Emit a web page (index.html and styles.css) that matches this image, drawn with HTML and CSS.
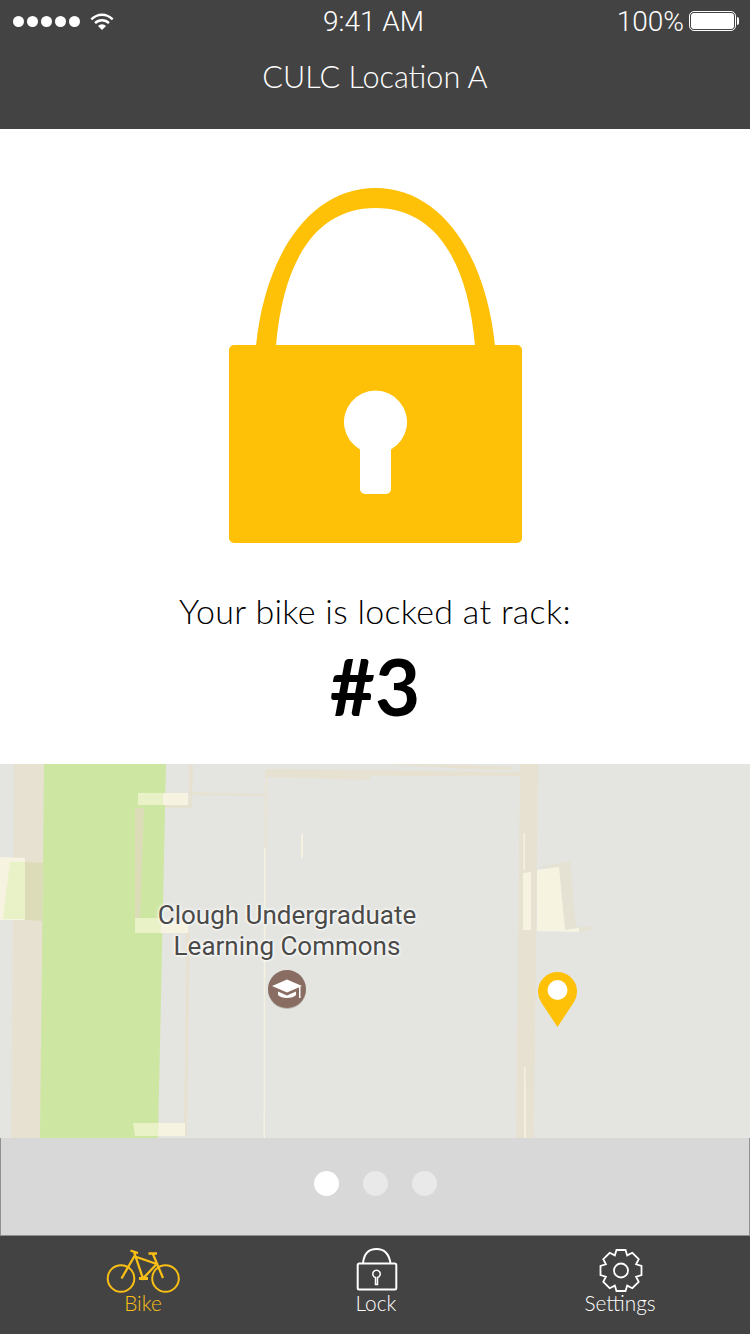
FILE: index.html
```html
<!DOCTYPE html>
<html lang="en">
<head>
<meta charset="utf-8">
<title>CULC Location A</title>
<link rel="stylesheet" href="styles.css">
</head>
<body>
<div class="phone">
  <header class="header">
    <div class="status">
      <div class="status-left">
        <div class="signal"><i></i><i></i><i></i><i></i><i></i></div>
        <svg class="wifi" viewBox="90 12 24 18"><path d="M90.500 18.500a16 16 0 0 1 23 0l-1.600 1.800a13.600 13.600 0 0 0-19.800 0z"/><path d="M94.200 22.300a10.800 10.800 0 0 1 15.600 0l-1.700 1.800a8.400 8.400 0 0 0-12.200 0z"/><path d="M98 26a5.600 5.600 0 0 1 8 0l-4 4z"/></svg>
      </div>
      <div class="status-time">9:41 AM</div>
      <div class="status-right">
        <span class="percent">100%</span>
        <div class="battery"><div class="battery-fill"></div></div>
      </div>
    </div>
    <h1 class="title">CULC Location A</h1>
  </header>

  <main class="hero">
    <svg class="big-lock" viewBox="229 188 293 355">
      <path class="lock-fill" d="M256 346C265 255 310 188 375.500 188S486 255 495 346H475C468 262 436 208 375.500 208S283 262 276 346Z"/>
      <path class="lock-fill" fill-rule="evenodd" d="M234 345H517a5 5 0 0 1 5 5V538a5 5 0 0 1-5 5H234a5 5 0 0 1-5-5V350a5 5 0 0 1 5-5ZM360 449.500V489a5 5 0 0 0 5 5H386a5 5 0 0 0 5-5V449.500A31.500 31.500 0 1 0 360 449.500Z"/>
    </svg>
    <p class="message">Your bike is locked at rack:</p>
    <p class="rack">#3</p>
  </main>

  <section class="map">
    <svg class="map-bg" viewBox="0 764 750 374">
      <g class="road">
        <polygon points="14,764 44,764 41,1138 11,1138"/>
        <polygon points="189,764 193,764 192,808 135,808 135,804 189,804"/>
        <polygon points="193,792 265,794 265,796 193,795"/>
        <polygon points="265,769 360,770 520,772 520,776 370,776 369,780 268,777 265,777"/>
        <polygon points="382,764 470,765 512,767 512,770 470,769"/>
        <polygon points="520,764 538,764 534,1138 516,1138"/>
        <polygon points="186,933 190,933 187,1136 184,1136"/>
      </g>
      <polygon class="road-faint" points="265,777 268,777 267,850 264,850"/>
      <polygon class="park" points="44,764 166,764 158,1138 40,1138"/>
      <polygon class="path" points="135,808 144,808 140,918 135,918"/>
      <polygon class="path" points="25,862 43,863 42,921 25,920"/>
      <polygon class="cream-green" points="138,793 163,793 163,805 138,805"/>
      <polygon class="cream" points="163,793 188,793 188,805 163,805"/>
      <polygon class="cream-green" points="135,918 161,918 160,933 135,933"/>
      <polygon class="cream" points="161,920 188,922 188,933 160,933"/>
      <polygon class="cream-green" points="133,1123 159,1123 158,1136 135,1136"/>
      <polygon class="cream" points="159,1123 185,1123 185,1136 158,1136"/>
      <polygon class="cream" points="0,857 25,858 25,920 0,920"/>
      <polygon class="cream-green" points="10,862 25,862 25,919 3,919"/>
      <polygon class="building" points="537,868 570,861 576,928 565,930 559,867"/>
      <polygon class="cream" points="523,873 531,872 531,930 523,930"/>
      <polygon class="cream" points="537,870 559,867 565,930 579,928 579,932 537,931"/>
      <polygon class="building" points="579,927 591,926 591,930 579,932"/>
      <polygon class="line" points="523.500,833 525,833 525,870 523.500,870"/>
      <polygon class="line" points="524,1067 525.500,1067 526,1138 524,1138"/>
      <polygon class="line" points="264,848 265.500,848 265,1138 263.500,1138"/>
      <polygon class="line" points="301,834 303,834 303,856 301,860"/>
    </svg>
    <div class="map-label">Clough Undergraduate<br>Learning Commons</div>
    <svg class="poi" viewBox="0 0 38 40">
      <circle class="poi-shadow" cx="19" cy="20" r="19"/>
      <circle class="poi-disc" cx="19" cy="19" r="19"/>
      <path class="poi-cap" d="M19 9.500 34 16 19 22.500 4 16Z"/>
      <path class="poi-cap" d="M10 21.500 19 25.500 28 21.500V25C25 29 13 29 10 25Z"/>
      <rect class="poi-cap" x="31" y="17" width="1.500" height="11"/>
    </svg>
    <svg class="pin" viewBox="0 0 39 55">
      <path class="pin-body" d="M19.500 55 3.500 30.700A19.500 19.500 0 1 1 35.500 30.700Z"/>
      <circle class="pin-dot" cx="19.500" cy="18" r="10"/>
    </svg>
  </section>

  <section class="pager">
    <span class="dot dot-active"></span>
    <span class="dot"></span>
    <span class="dot"></span>
  </section>

  <nav class="tabs">
    <a class="tab tab-bike">
      <svg class="tab-icon icon-bike" viewBox="105 1247 76 46">
        <circle cx="121" cy="1278.500" r="13.300"/>
        <circle cx="165.500" cy="1278.500" r="13.300"/>
        <path class="frame" d="M121.500 1278.500 134.500 1256M130.500 1250.500 138 1253.200M134 1252 143 1278.500 156.700 1264 133.500 1256M148.500 1253.500H157M152.700 1253.500 163 1278"/>
        <path class="pedal" d="M139 1278.500H148"/>
      </svg>
      <span class="tab-label">Bike</span>
    </a>
    <a class="tab tab-lock">
      <svg class="tab-icon icon-lock" viewBox="336 1247 80 46">
        <path d="M363 1263C364 1254 369 1249 376.500 1249S389 1254 390.500 1263"/>
        <rect x="357.700" y="1263.500" width="38.600" height="26" rx="1.500"/>
        <path class="keyhole" d="M375.500 1277.500V1284.500H377.500V1277.500A3.700 3.700 0 1 0 375.500 1277.500Z"/>
      </svg>
      <span class="tab-label">Lock</span>
    </a>
    <a class="tab tab-settings">
      <svg class="tab-icon icon-gear" viewBox="-41 -23.500 80 46">
        <path d="M-4.500-20.500H4.500L6.200-15.100 11.300-17.700 17.700-11.300 15.100-6.200 20.500-4.500V4.500L15.100 6.200 17.700 11.300 11.300 17.700 6.200 15.100 4.500 20.500H-4.500L-6.200 15.100-11.300 17.700-17.700 11.300-15.100 6.200-20.500 4.500V-4.500L-15.100-6.200-17.700-11.300-11.300-17.700-6.200-15.100Z"/>
        <circle cx="0" cy="0" r="7"/>
      </svg>
      <span class="tab-label">Settings</span>
    </a>
  </nav>
</div>
</body>
</html>
```
FILE: styles.css
```css
* { box-sizing: border-box; }
html, body { margin: 0; padding: 0; }
body { background: #fff; font-family: "Lato", "Liberation Sans", sans-serif; }
.phone { width: 750px; height: 1334px; display: flex; flex-direction: column; overflow: hidden; }

.header { height: 129px; background: #434343; color: #fff; flex: none; }
.status { height: 42px; display: grid; grid-template-columns: 1fr auto 1fr; align-items: center; padding: 0 14px 0 13px; }
.status-left { display: flex; align-items: center; gap: 10px; }
.signal { display: flex; gap: 3px; width: 67px; }
.signal i { width: 11px; height: 11px; border-radius: 50%; background: #fff; }
.wifi { width: 24px; height: 18px; fill: #fff; margin-top: -1px; }
.status-time { font: 300 28px/40px "Roboto", sans-serif; padding-top: 2px; margin-left: -2px; }
.status-right { display: flex; align-items: center; justify-content: flex-end; gap: 5px; }
.percent { font: 300 28px/40px "Roboto", sans-serif; padding-top: 2px; }
.battery { position: relative; width: 47px; height: 20px; border: 1px solid #fff; border-radius: 5px; padding: 1px; }
.battery::after { content: ""; position: absolute; right: -4px; top: 5px; width: 2px; height: 8px; background: #fff; border-radius: 0 2px 2px 0; }
.battery-fill { width: 100%; height: 100%; background: #fff; border-radius: 3px; }
.title { margin: 0; padding-top: 15px; text-align: center; font-weight: 300; font-size: 30.600px; line-height: 40px; }

.hero { height: 635px; flex: none; display: flex; flex-direction: column; align-items: center; padding-top: 59px; background: #fff; color: #000; }
.big-lock { width: 293px; height: 355px; flex: none; }
.lock-fill { fill: #fec107; }
.message { margin: 46px 0 0; font-weight: 300; font-size: 34px; line-height: 44px; letter-spacing: 0.300px; }
.rack { margin: 11px 0 0; font-weight: 700; font-size: 78px; line-height: 84px; }

.map { position: relative; height: 374px; flex: none; background: #e4e5e0; overflow: hidden; }
.map-bg { display: block; width: 750px; height: 374px; }
.road polygon { fill: #e7e1d1; }
.road-faint { fill: #e8e3d6; }
.park { fill: #cde6a2; }
.path { fill: #dcdcb8; }
.cream { fill: #f6f3e0; }
.cream-green { fill: #e9f2c6; }
.building { fill: #e5e1d3; }
.line { fill: #f5f1e0; }
.map-label { position: absolute; left: 137px; top: 136px; width: 300px; text-align: center; font: 400 26px/31px "Roboto", sans-serif; color: #4a4a48; text-shadow: 0 0 2px #fff, 0 0 3px #fff, 0 0 4px #fff; }
.poi { position: absolute; left: 268px; top: 206px; width: 38px; height: 40px; }
.poi-shadow { fill: #b9b7b0; }
.poi-disc { fill: #8a6d62; }
.poi-cap { fill: #fff; }
.pin { position: absolute; left: 538px; top: 208px; width: 39px; height: 55px; }
.pin-body { fill: #fec107; }
.pin-dot { fill: #fff; }

.pager { height: 98px; flex: none; display: flex; justify-content: center; align-items: center; gap: 24px; background: #d8d8d8; border: 1px solid #909090; border-top: 0; padding-bottom: 7px; }
.dot { width: 25px; height: 25px; border-radius: 50%; background: #e9e9e9; }
.dot-active { background: #fff; }

.tabs { height: 98px; flex: none; display: flex; background: #434343; padding-left: 103px; }
.tab { width: 80px; display: flex; flex-direction: column; align-items: center; padding-top: 11px; color: #fff; }
.tab-lock { margin-left: 153px; }
.tab-settings { margin-left: 164px; }
.tab-bike { color: #f9bf14; }
.tab-icon { display: block; height: 46px; fill: none; stroke: currentColor; flex: none; }
.icon-bike { width: 76px; margin: 0 -2px; stroke-width: 2; }
.icon-bike .frame { stroke-width: 2.300; }
.icon-bike .pedal { stroke-width: 3; }
.icon-lock { width: 80px; stroke-width: 2; }
.icon-lock .keyhole { stroke-width: 1.500; }
.icon-gear { width: 80px; stroke-width: 1.800; }
.tab-label { font-weight: 300; font-size: 20.800px; line-height: 24px; margin-top: -2px; white-space: nowrap; }
```
